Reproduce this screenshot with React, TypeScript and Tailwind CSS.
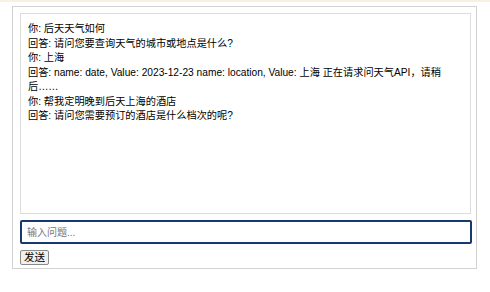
import React from "react";

// Chat transcript, as shown in the log panel
const MESSAGES: string[] = [
  "你: 后天天气如何",
  "回答: 请问您要查询天气的城市或地点是什么?",
  "你: 上海",
  "回答: name: date, Value: 2023-12-23 name: location, Value: 上海 正在请求问天气API，请稍后……",
  "你: 帮我定明晚到后天上海的酒店",
  "回答: 请问您需要预订的酒店是什么档次的呢?",
];

const FONT = "font-['Liberation_Sans','Noto_Sans_CJK_SC',sans-serif]";

export default function App() {
  return (
    <div className={`h-[292px] w-[490px] bg-white ${FONT} text-black`}>
      <div className="h-[2px] bg-[#f7f1e3]" />

      <div className="ml-[12px] mt-[4px] flex h-[263px] w-[465px] flex-col border border-[#d2d2d2] pl-[7px] pr-[5px] pt-[6px]">
        {/* Message log */}
        <div className="h-[204px] border border-[#dcdcdc] pl-[7px] pr-[20px] pt-[8px] text-[10.2px] leading-[14.5px] text-black">
          {MESSAGES.map((m, i) => (
            <div key={i}>{m}</div>
          ))}
        </div>

        {/* Question input */}
        <input
          className="mt-[6px] h-[24px] w-[452px] rounded-[2px] border-2 border-[#16396f] px-[5px] text-[10px] text-black placeholder:text-[#777] outline-none"
          placeholder="输入问题..."
        />

        <div>
          <button className="mt-[1px] h-[15px] rounded-[2px] border border-[#8a8a8a] bg-[#efefef] px-[3px] text-[10.5px] leading-[13px]">
            发送
          </button>
        </div>
      </div>
    </div>
  );
}
